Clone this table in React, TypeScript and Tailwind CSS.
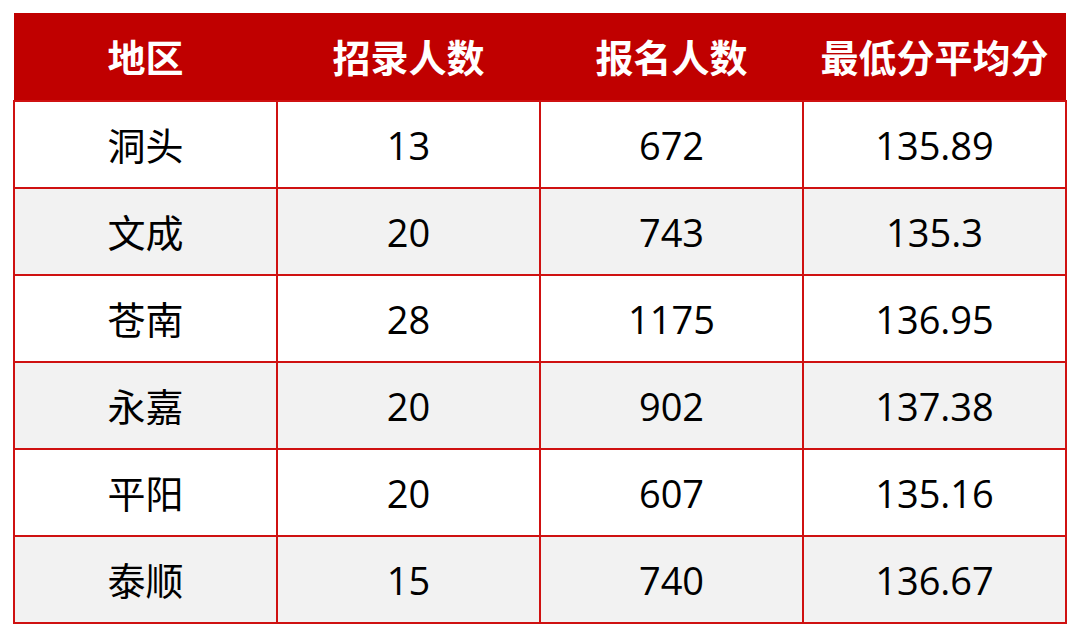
const rows = [
  ["洞头", "13", "672", "135.89"],
  ["文成", "20", "743", "135.3"],
  ["苍南", "28", "1175", "136.95"],
  ["永嘉", "20", "902", "137.38"],
  ["平阳", "20", "607", "135.16"],
  ["泰顺", "15", "740", "136.67"],
];

const headers = ["地区", "招录人数", "报名人数", "最低分平均分"];

export default function App() {
  return (
    <div className="w-[1080px] h-[638px] bg-white pl-[13px] pt-[13px] font-['Open_Sans','Noto_Sans_CJK_SC',sans-serif]">
      <table className="w-[1054px] border-collapse table-fixed">
        <thead>
          <tr className="h-[88px] bg-[#c00000]">
            {headers.map((h) => (
              <th key={h} className="text-white text-[38px] font-bold text-center p-0 leading-none">
                {h}
              </th>
            ))}
          </tr>
        </thead>
        <tbody>
          {rows.map((r, i) => (
            <tr key={i} className={`h-[87px] ${i % 2 === 1 ? "bg-[#f2f2f2]" : "bg-white"}`}>
              {r.map((c, j) => (
                <td
                  key={j}
                  className="border-2 border-[#cf1111] text-center text-[38px] text-black p-0 leading-none"
                >
                  {c}
                </td>
              ))}
            </tr>
          ))}
        </tbody>
      </table>
    </div>
  );
}
